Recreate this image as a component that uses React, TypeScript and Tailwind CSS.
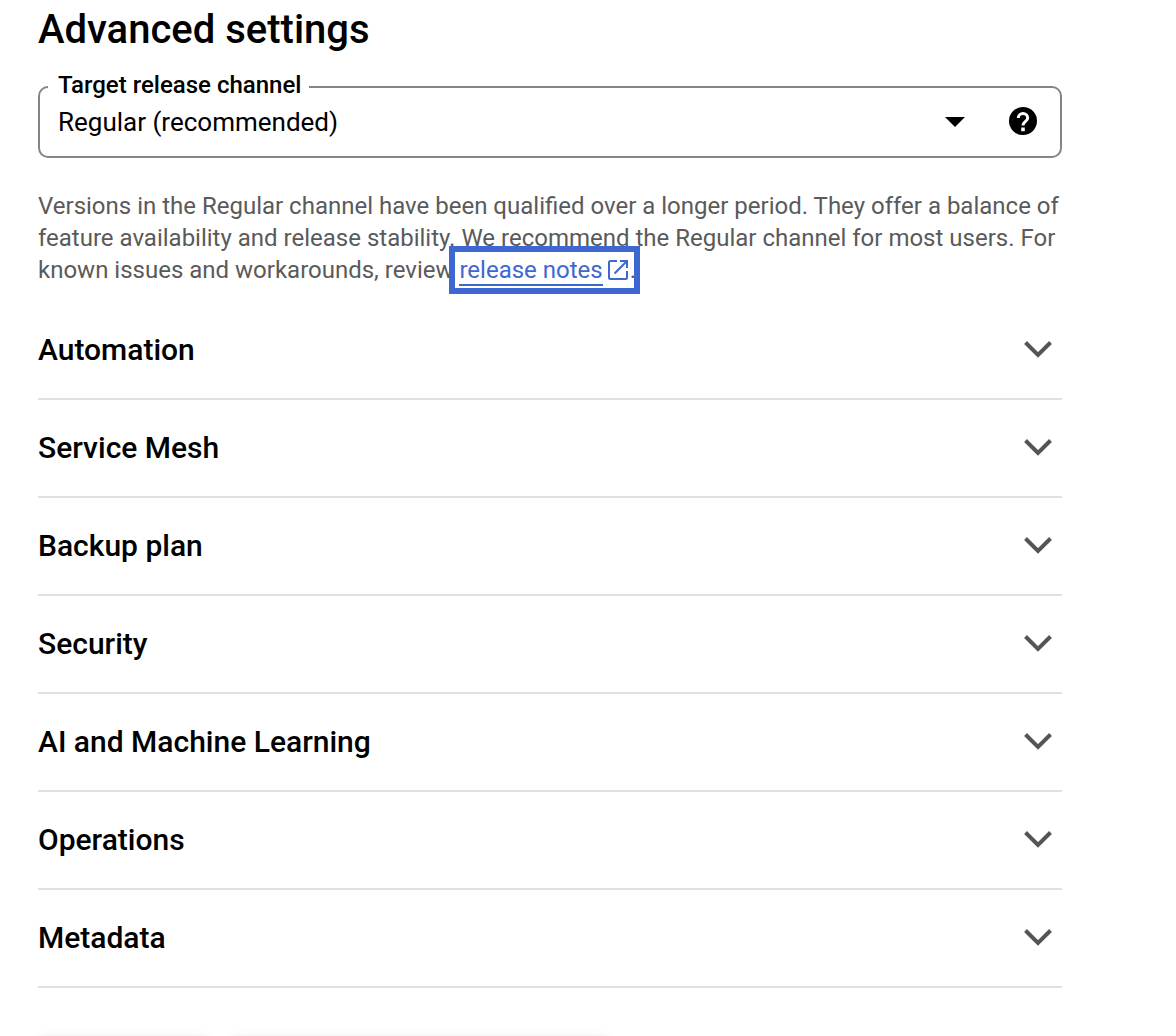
import { useState } from "react";

const sections = [
  "Automation",
  "Service Mesh",
  "Backup plan",
  "Security",
  "AI and Machine Learning",
  "Operations",
  "Metadata",
];

function HelpIcon() {
  return (
    <svg viewBox="0 0 28 28" className="size-7" aria-hidden="true">
      <circle cx="14" cy="14" r="14" />
      <path
        d="M9.3 11a4.7 4.5 0 0 1 9.4 0c0 3.3-4.7 3.4-4.7 7.4"
        fill="none"
        stroke="#fff"
        strokeWidth="3"
      />
      <path d="M12.2 20.6h3.6v3.6h-3.6z" fill="#fff" />
    </svg>
  );
}

function ChevronIcon({ open }: { open: boolean }) {
  return (
    <svg
      viewBox="0 0 28 18"
      className={open ? "mb-0.5 h-[18px] w-7 rotate-180" : "mb-0.5 h-[18px] w-7"}
      fill="none"
      stroke="#555555"
      strokeWidth="4"
      aria-hidden="true"
    >
      <path d="M1.5 2.5 14 15 26.5 2.5" />
    </svg>
  );
}

function ExternalIcon() {
  return (
    <svg
      viewBox="0 0 20 20"
      className="size-5"
      fill="none"
      stroke="currentColor"
      strokeWidth="2"
      aria-hidden="true"
    >
      <path d="M9 1H2.5A1.5 1.5 0 0 0 1 2.5v15A1.5 1.5 0 0 0 2.5 19h15a1.5 1.5 0 0 0 1.5-1.5V11M12 1h7v7M19 1 6.5 13.5" />
    </svg>
  );
}

function Section({ title }: { title: string }) {
  const [open, setOpen] = useState(false);
  return (
    <h2 className="border-b-2 border-[#e0e0e0]">
      <button
        type="button"
        aria-expanded={open}
        onClick={() => setOpen(!open)}
        className="flex h-24 w-full items-center justify-between pr-2.5 text-left text-[30px] font-medium leading-10"
      >
        {title}
        <ChevronIcon open={open} />
      </button>
    </h2>
  );
}

export default function App() {
  return (
    <main className="bg-white pl-[38px] pr-[114px] pt-1 font-['Roboto',sans-serif] text-black">
      <h1 className="text-[40px] font-medium leading-[52px]">Advanced settings</h1>

      <fieldset className="mt-4 rounded-[10px] border-2 border-[#80868b] pl-2">
        <legend className="pb-1 pl-2.5 pr-2 text-2xl font-medium leading-[26px]">
          <label htmlFor="channel">Target release channel</label>
        </legend>
        <div className="-mt-2.5 flex h-16 items-center pb-1 pr-[23px]">
          <div className="relative flex flex-1 items-center">
            <select
              id="channel"
              className="w-full appearance-none bg-transparent pl-2.5 text-[26px] leading-8"
            >
              <option>Regular (recommended)</option>
            </select>
            <svg
              viewBox="0 0 20 10"
              className="pointer-events-none absolute right-11 h-2.5 w-5"
              aria-hidden="true"
            >
              <path d="M0 0h20L10 10z" />
            </svg>
          </div>
          <button type="button" aria-label="Help" className="mb-0.5">
            <HelpIcon />
          </button>
        </div>
      </fieldset>

      <p className="mt-8 text-2xl leading-8 text-[#5a5a5a]">
        Versions in the Regular channel have been qualified over a longer period. They offer a balance of
        feature availability and release stability. We recommend the Regular channel for most users. For
        known issues and workarounds, review{" "}
        <a
          href="#release-notes"
          className="relative mb-0.5 inline-flex h-7 items-start gap-[5px] pr-0.5 align-bottom text-[#3f67d2] outline-6 outline-offset-4 outline-[#3f67d2]"
        >
          <span className="border-b-2 border-[#3f67d2] leading-7">release notes</span>
          <span className="flex h-7 items-center">
            <ExternalIcon />
          </span>
        </a>
        .
      </p>

      <div className="mt-4">
        {sections.map((title) => (
          <Section key={title} title={title} />
        ))}
      </div>

      <footer className="-mx-4 flex h-12 gap-6 overflow-hidden px-4 pt-[50px]">
        <button type="button" aria-label="Create" className="h-16 w-[170px] shrink-0 rounded bg-white shadow-[0_2px_12px_rgba(0,0,0,0.15)]" />
        <button type="button" aria-label="Reset" className="h-16 w-[376px] shrink-0 rounded bg-white shadow-[0_2px_12px_rgba(0,0,0,0.15)]" />
      </footer>
    </main>
  );
}
